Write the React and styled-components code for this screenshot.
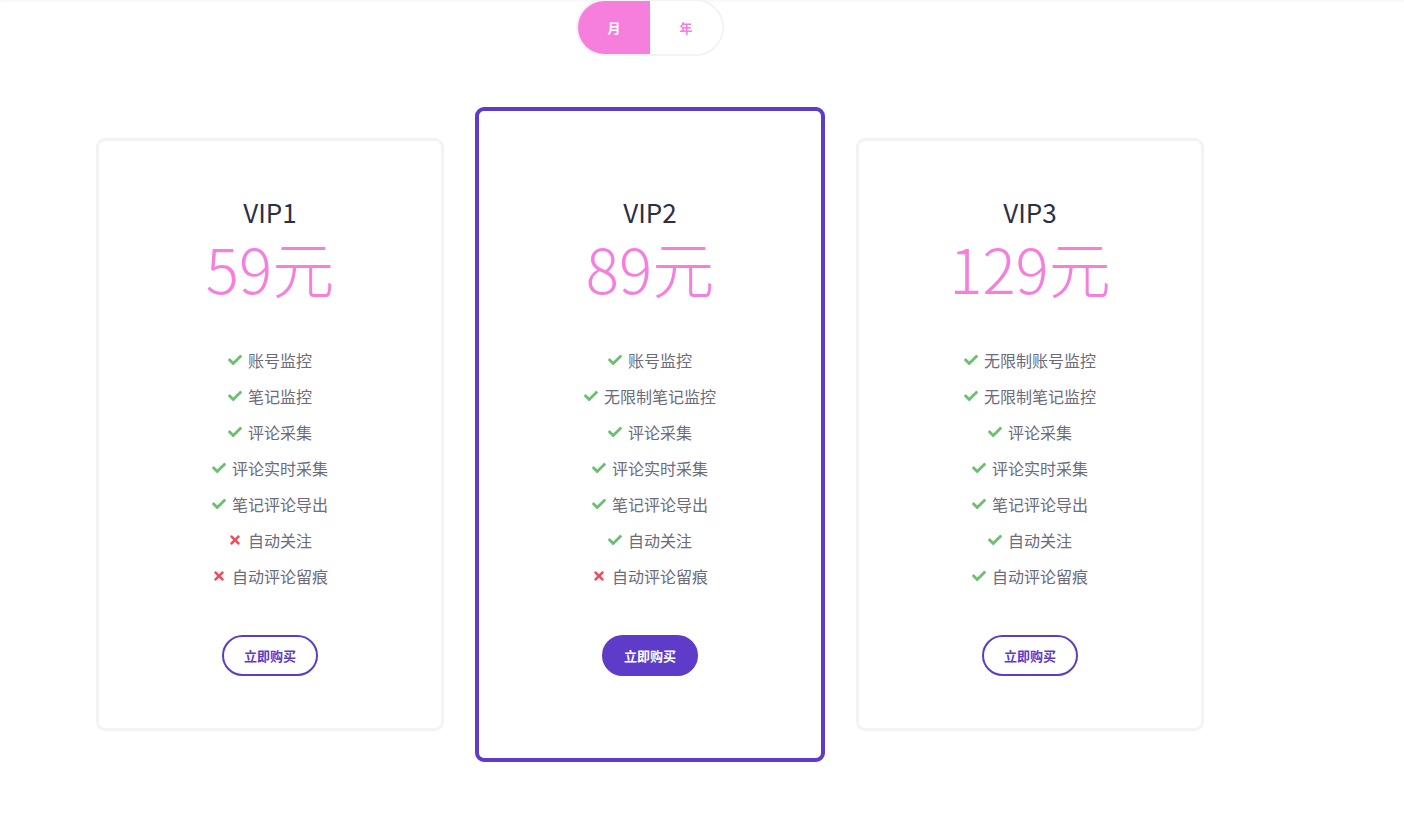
import React, { useState } from 'react'
import styled, { createGlobalStyle } from 'styled-components'
import { FaCheck, FaTimes } from 'react-icons/fa'

const GlobalStyle = createGlobalStyle`
    body {
        margin: 0;
        background: #fff;
        font-family: "Noto Sans CJK SC", "Noto Sans", sans-serif;
    }
`

const Page = styled.div`
    min-height: 813px;
    box-shadow: inset 0 3px 3px -2px rgba(0, 0, 0, 0.05);
`

const Container = styled.div`
    width: 1300px;
    display: flex;
    flex-direction: column;
    align-items: center;
`

const Toggle = styled.div`
    display: flex;
    width: 148px;
    height: 57px;
    border: 2px solid #f3f3f5;
    border-radius: 29px;
    margin-top: -1px;
    overflow: hidden;
    box-sizing: border-box;
`

const ToggleItem = styled.button`
    flex: 1;
    border: none;
    margin: 0;
    padding: 0;
    cursor: pointer;
    font-family: inherit;
    font-size: 13px;
    font-weight: 700;
    background: ${p => (p.active ? '#f67fde' : '#fff')};
    color: ${p => (p.active ? '#fff' : '#f67fde')};
`

const Row = styled.div`
    display: flex;
    align-items: center;
    gap: 31px;
    margin-top: 51px;
`

const Card = styled.div`
    width: ${p => (p.featured ? '350px' : '348px')};
    box-sizing: border-box;
    border: ${p => (p.featured ? '4px solid #5e3bc8' : '3px solid #f3f3f6')};
    border-radius: 9px;
    padding: ${p => (p.featured ? '83px 0 82px' : '53px 0 52px')};
    display: flex;
    flex-direction: column;
    align-items: center;
`

const Title = styled.div`
    font-size: 26px;
    line-height: 36px;
    color: #2d2f45;
`

const Price = styled.div`
    font-size: 62px;
    font-weight: 300;
    line-height: 72px;
    color: #f67fde;
    margin-top: 1px;
`

const Features = styled.ul`
    list-style: none;
    margin: 39px 0 0;
    padding: 0;
    display: flex;
    flex-direction: column;
    align-items: center;
`

const Feature = styled.li`
    height: 36px;
    display: flex;
    align-items: center;
    gap: 6px;
    font-size: 16px;
    color: #6b6b7b;
    svg {
        width: 14px;
        height: 14px;
        color: ${p => (p.ok ? '#6cbf72' : '#ee4d5a')};
    }
`

const BuyButton = styled.button`
    margin-top: 41px;
    width: 96px;
    height: 41px;
    border-radius: 21px;
    border: 2px solid #5e3bc8;
    background: ${p => (p.featured ? '#5e3bc8' : '#fff')};
    color: ${p => (p.featured ? '#fff' : '#5e3bc8')};
    font-family: inherit;
    font-size: 13px;
    font-weight: 700;
    cursor: pointer;
`

const plans = [
    {
        name: 'VIP1',
        price: '59元',
        features: [
            ['账号监控', true],
            ['笔记监控', true],
            ['评论采集', true],
            ['评论实时采集', true],
            ['笔记评论导出', true],
            ['自动关注', false],
            ['自动评论留痕', false],
        ],
    },
    {
        name: 'VIP2',
        price: '89元',
        featured: true,
        features: [
            ['账号监控', true],
            ['无限制笔记监控', true],
            ['评论采集', true],
            ['评论实时采集', true],
            ['笔记评论导出', true],
            ['自动关注', true],
            ['自动评论留痕', false],
        ],
    },
    {
        name: 'VIP3',
        price: '129元',
        features: [
            ['无限制账号监控', true],
            ['无限制笔记监控', true],
            ['评论采集', true],
            ['评论实时采集', true],
            ['笔记评论导出', true],
            ['自动关注', true],
            ['自动评论留痕', true],
        ],
    },
]

const App = () => {
    const [period, setPeriod] = useState('month')
    return (
        <Page>
            <GlobalStyle />
            <Container>
                <Toggle>
                    <ToggleItem active={period === 'month'} onClick={() => setPeriod('month')}>
                        月
                    </ToggleItem>
                    <ToggleItem active={period === 'year'} onClick={() => setPeriod('year')}>
                        年
                    </ToggleItem>
                </Toggle>
                <Row>
                    {plans.map(plan => (
                        <Card key={plan.name} featured={plan.featured}>
                            <Title>{plan.name}</Title>
                            <Price>{plan.price}</Price>
                            <Features>
                                {plan.features.map(([label, ok]) => (
                                    <Feature key={label} ok={ok}>
                                        {ok ? <FaCheck /> : <FaTimes />}
                                        {label}
                                    </Feature>
                                ))}
                            </Features>
                            <BuyButton featured={plan.featured}>立即购买</BuyButton>
                        </Card>
                    ))}
                </Row>
            </Container>
        </Page>
    )
}

export default App
